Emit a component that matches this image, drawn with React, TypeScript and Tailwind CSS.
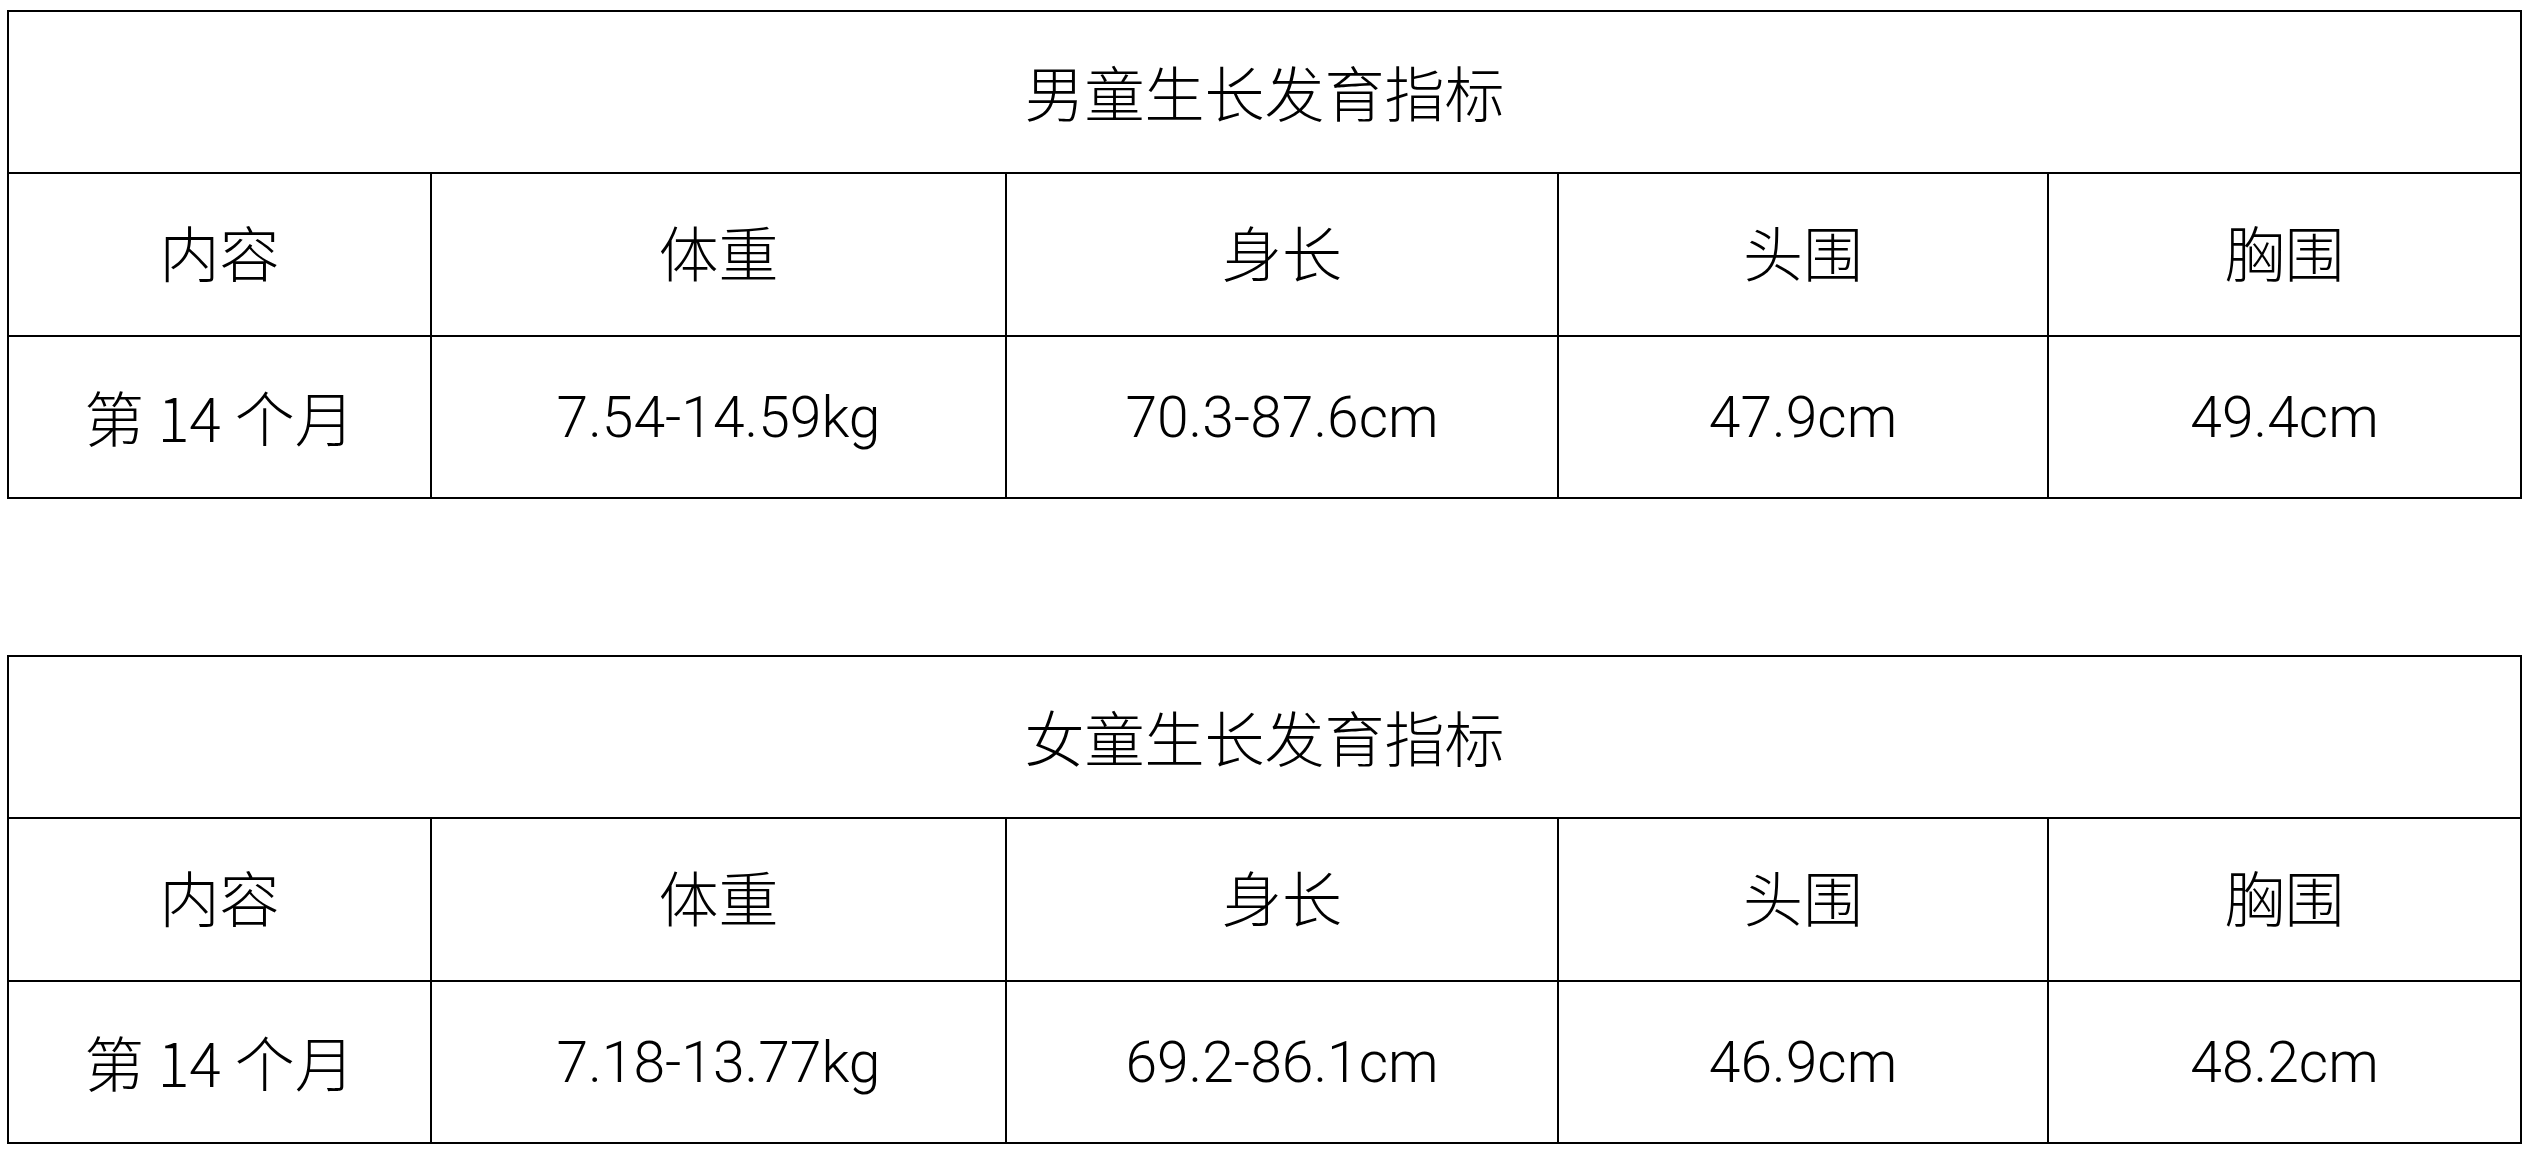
const boys = {
  title: '男童生长发育指标',
  values: ['7.54-14.59kg', '70.3-87.6cm', '47.9cm', '49.4cm'],
};

const girls = {
  title: '女童生长发育指标',
  values: ['7.18-13.77kg', '69.2-86.1cm', '46.9cm', '48.2cm'],
};

const headers = ['内容', '体重', '身长', '头围', '胸围'];

const cjk = { fontFamily: '"Noto Sans CJK SC", sans-serif' };
const num = { fontFamily: 'Roboto, "Noto Sans CJK SC", sans-serif' };

function GrowthTable({ title, values }: { title: string; values: string[] }) {
  return (
    <table className="table-fixed border-collapse w-[2513px] text-black font-light">
      <colgroup>
        <col className="w-[423px]" />
        <col className="w-[575px]" />
        <col className="w-[552px]" />
        <col className="w-[490px]" />
        <col className="w-[473px]" />
      </colgroup>
      <tbody>
        <tr className="h-[162px]">
          <td colSpan={5} className="border-2 border-black text-center text-[60px] leading-none pb-[2px]" style={cjk}>
            {title}
          </td>
        </tr>
        <tr className="h-[163px]">
          {headers.map((h) => (
            <td key={h} className="border-2 border-black text-center text-[60px] leading-none pb-[8px]" style={cjk}>
              {h}
            </td>
          ))}
        </tr>
        <tr className="h-[162px]">
          <td className="border-2 border-black text-center text-[60px] leading-none pb-[2px]" style={cjk}>
            第 14 个月
          </td>
          {values.map((v) => (
            <td key={v} className="border-2 border-black text-center text-[57px] leading-none" style={num}>
              {v}
            </td>
          ))}
        </tr>
      </tbody>
    </table>
  );
}

export default function App() {
  return (
    <div className="w-[2532px] h-[1153px] bg-white pl-[7px] pt-[10px] flex flex-col gap-[156px]">
      <GrowthTable {...boys} />
      <GrowthTable {...girls} />
    </div>
  );
}
